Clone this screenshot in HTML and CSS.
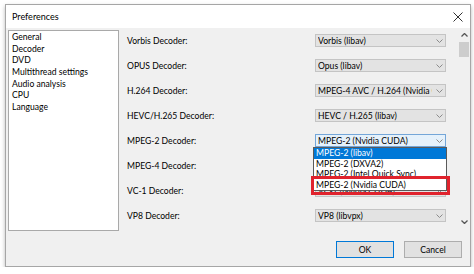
FILE: index.html
```html
<!DOCTYPE html>
<html>
<head>
<meta charset="utf-8">
<title>Preferences</title>
<link rel="stylesheet" href="styles.css">
</head>
<body>
<div class="dialog">
    <div class="titlebar">
        <span class="title">Preferences</span>
        <svg class="close" width="10" height="10" viewBox="0 0 10 10"><path d="M0.5 0.5 L9.5 9.5 M9.5 0.5 L0.5 9.5" stroke="#333" stroke-width="1" fill="none"/></svg>
    </div>
    <div class="body">
        <div class="main">
            <ul class="pages">
                <li>General</li>
                <li>Decoder</li>
                <li>DVD</li>
                <li>Multithread settings</li>
                <li>Audio analysis</li>
                <li>CPU</li>
                <li>Language</li>
            </ul>
            <div class="pane">
                <div class="rows">
                    <div class="row">
                        <label>Vorbis Decoder:</label>
                        <div class="combo"><span>Vorbis (libav)</span><svg class="chev" width="7" height="4" viewBox="0 0 7 4"><path d="M0.5 0.5 L3.5 3.5 L6.5 0.5" stroke="#8a8a8a" fill="none"/></svg></div>
                    </div>
                    <div class="row">
                        <label>OPUS Decoder:</label>
                        <div class="combo"><span>Opus (libav)</span><svg class="chev" width="7" height="4" viewBox="0 0 7 4"><path d="M0.5 0.5 L3.5 3.5 L6.5 0.5" stroke="#8a8a8a" fill="none"/></svg></div>
                    </div>
                    <div class="row">
                        <label>H.264 Decoder:</label>
                        <div class="combo"><span>MPEG-4 AVC / H.264 (Nvidia CUDA)</span><svg class="chev" width="7" height="4" viewBox="0 0 7 4"><path d="M0.5 0.5 L3.5 3.5 L6.5 0.5" stroke="#8a8a8a" fill="none"/></svg></div>
                    </div>
                    <div class="row">
                        <label>HEVC/H.265 Decoder:</label>
                        <div class="combo"><span>HEVC / H.265 (libav)</span><svg class="chev" width="7" height="4" viewBox="0 0 7 4"><path d="M0.5 0.5 L3.5 3.5 L6.5 0.5" stroke="#8a8a8a" fill="none"/></svg></div>
                    </div>
                    <div class="row">
                        <label>MPEG-2 Decoder:</label>
                        <div class="combo open"><span>MPEG-2 (Nvidia CUDA)</span><svg class="chev" width="7" height="4" viewBox="0 0 7 4"><path d="M0.5 0.5 L3.5 3.5 L6.5 0.5" stroke="#8a8a8a" fill="none"/></svg>
                            <ul class="popup">
                                <li class="sel">MPEG-2 (libav)</li>
                                <li>MPEG-2 (DXVA2)</li>
                                <li>MPEG-2 (Intel Quick Sync)</li>
                                <li>MPEG-2 (Nvidia CUDA)</li>
                            </ul>
                            <div class="callout"></div>
                        </div>
                    </div>
                    <div class="row">
                        <label>MPEG-4 Decoder:</label>
                        <div class="combo"><span>MPEG-4 (libav)</span><svg class="chev" width="7" height="4" viewBox="0 0 7 4"><path d="M0.5 0.5 L3.5 3.5 L6.5 0.5" stroke="#8a8a8a" fill="none"/></svg></div>
                    </div>
                    <div class="row">
                        <label>VC-1 Decoder:</label>
                        <div class="combo"><span>VC-1 (Nvidia CUDA)</span><svg class="chev" width="7" height="4" viewBox="0 0 7 4"><path d="M0.5 0.5 L3.5 3.5 L6.5 0.5" stroke="#8a8a8a" fill="none"/></svg></div>
                    </div>
                    <div class="row">
                        <label>VP8 Decoder:</label>
                        <div class="combo"><span>VP8 (libvpx)</span><svg class="chev" width="7" height="4" viewBox="0 0 7 4"><path d="M0.5 0.5 L3.5 3.5 L6.5 0.5" stroke="#8a8a8a" fill="none"/></svg></div>
                    </div>
                </div>
                <div class="scrollbar">
                    <div class="arrow"><svg width="7" height="4" viewBox="0 0 7 4"><path d="M0.5 3.5 L3.5 0.5 L6.5 3.5" stroke="#555" stroke-width="1.3" fill="none"/></svg></div>
                    <div class="track"><div class="thumb"></div></div>
                    <div class="arrow"><svg width="7" height="4" viewBox="0 0 7 4"><path d="M0.5 0.5 L3.5 3.5 L6.5 0.5" stroke="#555" stroke-width="1.3" fill="none"/></svg></div>
                </div>
            </div>
        </div>
        <div class="buttons">
            <button class="default">OK</button>
            <button>Cancel</button>
        </div>
    </div>
</div>
</body>
</html>
```

FILE: styles.css
```css
html, body {
    margin: 0;
}

body {
    background: #fff;
    font-family: Lato, "Liberation Sans", sans-serif;
    font-size: 8.6px;
    color: #000;
}

.dialog {
    margin: 4px 0 0 5px;
    width: 466px;
    height: 263px;
    box-sizing: border-box;
    border: 1px solid #a6a6a6;
    display: flex;
    flex-direction: column;
    box-shadow: 0 2px 4px rgba(0, 0, 0, 0.28);
}

.titlebar {
    height: 23px;
    flex: none;
    background: #fff;
    display: flex;
    align-items: center;
    justify-content: space-between;
    padding: 0 7px 0 6px;
}

.title {
    font-size: 9px;
}

.body {
    flex: 1;
    background: #f0f0f0;
    display: flex;
    flex-direction: column;
    padding: 0 0 8px 2px;
}

.main {
    height: 206px;
    display: flex;
}

.pages {
    list-style: none;
    margin: 2px 0 0;
    padding: 1px 3px;
    width: 111px;
    height: 201px;
    box-sizing: border-box;
    background: #fff;
    border: 1px solid #a9a9a9;
    line-height: 11.67px;
}

.pane {
    flex: 1;
    display: flex;
}

.rows {
    flex: 1;
    padding-left: 8px;
}

.row {
    height: 25px;
    display: flex;
    align-items: center;
}

.row label {
    width: 188px;
}

.combo {
    width: 131px;
    height: 13px;
    box-sizing: border-box;
    border: 1px solid #c4c4c4;
    background: #e3e3e3;
    display: flex;
    align-items: center;
    padding-left: 2px;
    position: relative;
}

.combo span {
    flex: 1;
    overflow: hidden;
    white-space: nowrap;
}

.combo .chev {
    flex: none;
    margin: 0 2px 0 4px;
}

.combo.open {
    background: #e5f1fb;
    border-color: #74a6d8;
    z-index: 2;
}

.popup {
    position: absolute;
    top: 12px;
    left: -3px;
    width: 134px;
    margin: 0;
    padding: 0;
    list-style: none;
    box-sizing: border-box;
    border: 1px solid #5a5a5a;
    background: #fff;
}

.popup li {
    height: 10.5px;
    line-height: 10.5px;
    padding-left: 2px;
    white-space: nowrap;
}

.popup li.sel {
    background: #0078d7;
    color: #fff;
}

.callout {
    position: absolute;
    left: -5px;
    top: 41px;
    width: 139px;
    height: 19px;
    box-sizing: border-box;
    border: 3px solid #e0232d;
}

.scrollbar {
    width: 12px;
    height: 199px;
    margin-top: 1px;
    display: flex;
    flex-direction: column;
}

.scrollbar .arrow {
    height: 12px;
    display: flex;
    align-items: center;
    justify-content: center;
}

.scrollbar .track {
    flex: 1;
    padding: 1px 1px 0;
}

.scrollbar .thumb {
    height: 15px;
    background: #cdcdcd;
}

.buttons {
    display: flex;
    justify-content: flex-end;
    gap: 10px;
    margin-top: 7px;
    padding-right: 8px;
}

.buttons button {
    width: 58px;
    height: 17px;
    padding: 0;
    font: inherit;
    color: #000;
    background: #e1e1e1;
    border: 1px solid #adadad;
}

.buttons button.default {
    border-color: #0078d7;
}
```
